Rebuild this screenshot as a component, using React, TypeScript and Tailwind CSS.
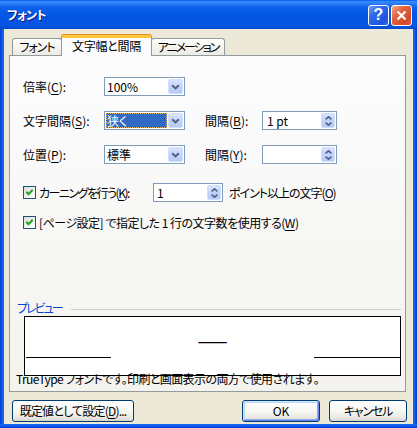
import React from 'react';

const F = "font-['Noto_Sans_CJK_JP','Noto_Sans_CJK_SC',sans-serif] [font-feature-settings:'palt']";

function U({ c }: { c: string }) {
  return <span className="underline underline-offset-[2px] decoration-1">{c}</span>;
}

function ComboButton() {
  return (
    <div className="w-[15px] h-full rounded-[2px] border border-[#D2DEFC] bg-[linear-gradient(to_bottom,#D9E4FE,#C4D4FB_45%,#B7CAF6)] flex items-center justify-center">
      <svg width="9" height="6" viewBox="0 0 9 6">
        <path d="M1.2 1.2 L4.5 4.4 L7.8 1.2" stroke="#4D6185" strokeWidth="2" fill="none" />
      </svg>
    </div>
  );
}

function SpinButton() {
  return (
    <div className="w-[14px] h-full rounded-[2px] border border-[#D2DEFC] bg-[linear-gradient(to_bottom,#D9E4FE,#C4D4FB_45%,#B7CAF6)] flex flex-col items-center justify-center gap-[2px]">
      <svg width="7" height="4" viewBox="0 0 7 4">
        <path d="M0.6 3.4 L3.5 0.8 L6.4 3.4" stroke="#4D6185" strokeWidth="1.6" fill="none" />
      </svg>
      <svg width="7" height="4" viewBox="0 0 7 4">
        <path d="M0.6 0.6 L3.5 3.2 L6.4 0.6" stroke="#4D6185" strokeWidth="1.6" fill="none" />
      </svg>
    </div>
  );
}

function Combo({ value, selected }: { value: string; selected?: boolean }) {
  return (
    <div className="w-[81px] h-[19px] border border-[#7F9DB9] bg-white flex p-[1px]">
      {selected ? (
        <div className="flex-1 mr-[1px] bg-[#316AC5] text-white border border-dotted border-[#E8B860] flex items-center leading-[14px] overflow-hidden">
          {value}
        </div>
      ) : (
        <div className="flex-1 pl-[1px] flex items-center leading-[14px]">{value}</div>
      )}
      <ComboButton />
    </div>
  );
}

function Spin({ value, className, pad }: { value: string; className: string; pad: string }) {
  return (
    <div className={`h-[19px] border border-[#7F9DB9] bg-white flex p-[1px] ${className}`}>
      <div className={`flex-1 flex items-center leading-[14px] ${pad}`}>{value}</div>
      <SpinButton />
    </div>
  );
}

function Check() {
  return (
    <div className="w-[13px] h-[13px] shrink-0 border border-[#1C5180] bg-[linear-gradient(135deg,#DCDCD7,#F4F4F1_60%,#FFFFFF)] flex items-center justify-center">
      <svg width="9" height="9" viewBox="0 0 9 9">
        <path d="M1.3 3.8 L3.5 6.2 L7.7 1.8" stroke="#21A121" strokeWidth="2" fill="none" />
      </svg>
    </div>
  );
}

function Btn({ children, className, def }: { children: React.ReactNode; className: string; def?: boolean }) {
  return (
    <div
      className={`h-[22px] rounded-[3px] border border-[#003C74] bg-[linear-gradient(to_bottom,#FFFFFF,#F5F5F1_55%,#E8E7E0_85%,#D8D3C9)] flex items-center justify-center leading-[14px] whitespace-nowrap ${
        def ? 'shadow-[inset_1px_1px_0_#CEE7FF,inset_-1px_-1px_0_#6982EE,inset_2px_2px_0_#BCD4F6,inset_-2px_-2px_0_#89ADE4]' : ''
      } ${className}`}
    >
      {children}
    </div>
  );
}

export default function App() {
  return (
    <div className={`${F} w-[417px] h-[428px] flex flex-col bg-[#0A5AE6] overflow-hidden text-[12px] text-black select-none`}>
      {/* title bar */}
      <div className="h-[29px] shrink-0 flex items-center pl-[7px] pr-[5px] pt-[1px] bg-[linear-gradient(to_bottom,#0058EE_0%,#3A8CF8_6%,#2B7EF5_12%,#0B62EC_25%,#0658E6_45%,#0555E5_70%,#0654E0_88%,#0250D8_95%,#0048C8_100%)]">
        <span className="text-white font-bold text-[12px] leading-[14px] tracking-[-0.7px] [text-shadow:1px_1px_0_#0A1883]">フォント</span>
        <div className="flex-1" />
        <div className="w-[21px] h-[21px] rounded-[3px] border border-white bg-[linear-gradient(135deg,#6AA0F8,#2E6BEA_35%,#1C55DF_75%,#2C68E6)] flex items-center justify-center">
          <span className="text-white font-bold text-[16px] leading-none font-['Liberation_Sans',sans-serif]">?</span>
        </div>
        <div className="w-[2px]" />
        <div className="w-[21px] h-[21px] rounded-[3px] border border-white bg-[linear-gradient(135deg,#F2A88E,#E2663F_35%,#D44A2B_75%,#DC5A3A)] flex items-center justify-center">
          <svg width="11" height="11" viewBox="0 0 11 11">
            <path d="M1.5 1.5 L9.5 9.5 M9.5 1.5 L1.5 9.5" stroke="white" strokeWidth="2.2" />
          </svg>
        </div>
      </div>

      <div className="flex h-[395px] shrink-0">
        <div className="w-[4px] bg-[linear-gradient(to_right,#0838D0,#0A5CEA_50%,#1A68EE)]" />
        <div className="w-[409px] bg-[#ECE9D8] flex flex-col">
          {/* tabs */}
          <div className="h-[26px] flex items-end pl-[8px]">
            <div className="w-[50px] h-[17px] border border-b-0 border-[#919B9C] rounded-t-[3px] bg-[linear-gradient(to_bottom,#FFFFFF,#F3F2ED_60%,#ECEBE6)] flex items-center justify-center leading-[14px] tracking-[-1px] whitespace-nowrap">
              フォント
            </div>
            <div className="relative z-10 -ml-px -mr-px -mb-px w-[91px] h-[21px] border-x border-[#919B9C] border-t-[3px] border-t-[#FFC83C] rounded-t-[3px] bg-[#FCFCFE] flex items-center justify-center pb-[2px] leading-[14px] tracking-[-0.3px] whitespace-nowrap shadow-[0_-1px_0_#E68B2C]">
              文字幅と間隔
            </div>
            <div className="w-[74px] h-[17px] border border-b-0 border-[#919B9C] rounded-t-[3px] bg-[linear-gradient(to_bottom,#FFFFFF,#F3F2ED_60%,#ECEBE6)] flex items-center justify-center leading-[14px] tracking-[-2px] whitespace-nowrap">
              アニメーション
            </div>
          </div>

          {/* panel */}
          <div className="ml-[5px] w-[397px] h-[337px] border border-[#919B9C] bg-[linear-gradient(to_bottom,#FCFCFE,#F4F3EE)] flex flex-col">
            <div className="mt-[21px] ml-[13px] h-[19px] flex items-center">
              <div className="w-[81px] leading-[14px]">倍率(<U c="C" />):</div>
              <Combo value="100%" />
            </div>
            <div className="mt-[15px] ml-[13px] h-[19px] flex items-center">
              <div className="w-[81px] leading-[14px]">文字間隔(<U c="S" />):</div>
              <Combo value="狭く" selected />
              <div className="ml-[20px] w-[57px] leading-[14px]">間隔(<U c="B" />):</div>
              <Spin value="1 pt" className="w-[75px]" pad="pl-[3px]" />
            </div>
            <div className="mt-[15px] ml-[13px] h-[19px] flex items-center">
              <div className="w-[81px] leading-[14px]">位置(<U c="P" />):</div>
              <Combo value="標準" />
              <div className="ml-[20px] w-[57px] leading-[14px]">間隔(<U c="Y" />):</div>
              <Spin value="" className="w-[75px]" pad="pl-[3px]" />
            </div>
            <div className="mt-[19px] ml-[13px] h-[19px] flex items-center">
              <div className="w-[130px] flex items-center">
                <Check />
                <span className="ml-[3px] leading-[14px] tracking-[-1.5px] whitespace-nowrap">カーニングを行う(<U c="K" />):</span>
              </div>
              <Spin value="1" className="w-[70px]" pad="pl-[2px]" />
              <span className="ml-[6px] leading-[14px] tracking-[-1px] whitespace-nowrap">ポイント以上の文字(<U c="O" />)</span>
            </div>
            <div className="mt-[14px] ml-[13px] h-[13px] flex items-center">
              <Check />
              <span className="ml-[3px] leading-[14px] tracking-[-0.5px] whitespace-nowrap">[ページ設定] で指定した 1 行の文字数を使用する(<U c="W" />)</span>
            </div>

            {/* preview */}
            <div className="mt-[72px] ml-[7px] mr-[4px] h-[14px] flex items-center">
              <span className="text-[#0046D5] leading-[14px] tracking-[-2px] whitespace-nowrap">プレビュー</span>
              <div className="flex-1 ml-[9px] mt-[2px] h-px bg-[#D0D0BF]" />
            </div>
            <div className="mt-[1px] ml-[14px] w-[377px] h-[60px] border border-black bg-white flex items-start">
              <div className="mt-[40px] ml-[1px] w-[85px] h-px bg-black" />
              <div className="flex-1 flex justify-center">
                <div className="mt-[10px] text-[31px] leading-[31px] scale-y-50">一</div>
              </div>
              <div className="mt-[40px] w-[86px] h-px bg-black" />
            </div>
            <div className="-mt-[3px] ml-[6px] h-[12px] leading-[12px] tracking-[-0.6px] whitespace-nowrap">
              TrueType フォントです。印刷と画面表示の両方で使用されます。
            </div>
          </div>

          {/* buttons */}
          <div className="mt-[8px] h-[22px] flex">
            <Btn className="ml-[8px] w-[122px] tracking-[-0.8px]">
              既定値として設定(<U c="D" />)...
            </Btn>
            <div className="flex-1" />
            <Btn def className="w-[78px]">
              OK
            </Btn>
            <Btn className="ml-[9px] mr-[6px] w-[78px] tracking-[-1.2px]">キャンセル</Btn>
          </div>
        </div>
        <div className="w-[4px] bg-[linear-gradient(to_left,#0838D0,#0A5CEA_50%,#1A68EE)]" />
      </div>
      <div className="h-[4px] shrink-0 bg-[linear-gradient(to_top,#0838D0,#0A5CEA_50%,#1A68EE)]" />
    </div>
  );
}
